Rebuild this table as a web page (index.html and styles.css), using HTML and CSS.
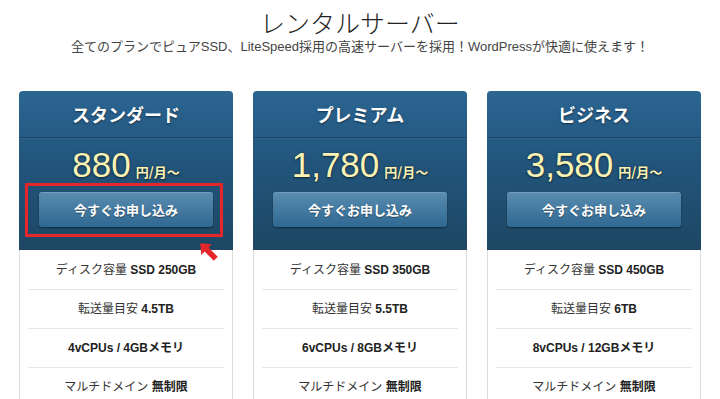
FILE: index.html
```html
<!DOCTYPE html>
<html lang="ja">
<head>
<meta charset="utf-8">
<title>レンタルサーバー</title>
<link rel="stylesheet" href="styles.css">
</head>
<body>
<header class="intro">
  <h1 class="title">レンタルサーバー</h1>
  <p class="lead">全てのプランでピュアSSD、LiteSpeed採用の高速サーバーを採用！WordPressが快適に使えます！</p>
</header>
<main class="plans">
  <section class="card">
    <div class="card-top">
      <h2 class="card-name">スタンダード</h2>
      <div class="price"><span class="amount">880</span><span class="unit">円/月〜</span></div>
      <a class="btn">今すぐお申し込み</a>
    </div>
    <ul class="specs">
      <li>ディスク容量 <b>SSD 250GB</b></li>
      <li>転送量目安 <b>4.5TB</b></li>
      <li><b>4vCPUs / 4GBメモリ</b></li>
      <li>マルチドメイン <b>無制限</b></li>
    </ul>
    <div class="highlight"></div>
    <svg class="arrow" width="28" height="28" viewBox="-14 -14 28 28"><g transform="rotate(-135)"><polygon points="-11,-2.8 2,-2.8 2,-7.5 11,0 2,7.5 2,2.8 -11,2.8" fill="#e5262b"/></g></svg>
  </section>
  <section class="card">
    <div class="card-top">
      <h2 class="card-name">プレミアム</h2>
      <div class="price"><span class="amount">1,780</span><span class="unit">円/月〜</span></div>
      <a class="btn">今すぐお申し込み</a>
    </div>
    <ul class="specs">
      <li>ディスク容量 <b>SSD 350GB</b></li>
      <li>転送量目安 <b>5.5TB</b></li>
      <li><b>6vCPUs / 8GBメモリ</b></li>
      <li>マルチドメイン <b>無制限</b></li>
    </ul>
  </section>
  <section class="card">
    <div class="card-top">
      <h2 class="card-name">ビジネス</h2>
      <div class="price"><span class="amount">3,580</span><span class="unit">円/月〜</span></div>
      <a class="btn">今すぐお申し込み</a>
    </div>
    <ul class="specs">
      <li>ディスク容量 <b>SSD 450GB</b></li>
      <li>転送量目安 <b>6TB</b></li>
      <li><b>8vCPUs / 12GBメモリ</b></li>
      <li>マルチドメイン <b>無制限</b></li>
    </ul>
  </section>
</main>
</body>
</html>
```
FILE: styles.css
```css
* { box-sizing: border-box; }
html, body { margin: 0; padding: 0; }
body {
  width: 720px;
  height: 399px;
  overflow: hidden;
  background: #fff;
  font-family: "Liberation Sans", "Noto Sans CJK JP", sans-serif;
  color: #333;
}
.intro { text-align: center; padding-top: 7px; }
.title {
  margin: 0;
  font-family: "Noto Sans CJK JP", sans-serif;
  font-weight: 300;
  font-size: 25px;
  line-height: 30px;
  color: #222;
}
.lead {
  margin: 1px 0 0;
  font-size: 13px;
  line-height: 18px;
  color: #444;
}
.plans {
  display: flex;
  justify-content: center;
  gap: 20px;
  margin-top: 35px;
}
.card {
  position: relative;
  width: 214px;
  border: 1px solid #dcdcdc;
  border-top: none;
  border-radius: 4px 4px 0 0;
  background: #fff;
}
.card-top {
  margin: 0 -1px;
  border-radius: 4px 4px 0 0;
  background: linear-gradient(#2b6592, #22557c 45%, #1d4763);
  text-align: center;
  padding-bottom: 23px;
}
.card-name {
  margin: 0;
  height: 47px;
  line-height: 46px;
  font-family: "Noto Sans CJK JP", sans-serif;
  font-size: 18px;
  font-weight: bold;
  color: #fff;
  text-shadow: 0 1px 2px rgba(0,0,0,.5);
  border-bottom: 1px solid #1b4564;
  box-shadow: 0 1px 0 rgba(255,255,255,.06);
}
.price {
  margin-top: 5px;
  height: 44px;
  line-height: 44px;
  color: #fbf3b4;
  text-shadow: 0 0 2px #1a3a52, 0 1px 2px rgba(0,0,0,.6);
}
.amount {
  font-family: "Liberation Sans", sans-serif;
  font-size: 35px;
}
.unit {
  margin-left: 5px;
  font-size: 13px;
  font-weight: bold;
  font-family: "Noto Sans CJK JP", sans-serif;
}
.btn {
  display: block;
  margin: 5px 20px 0;
  height: 35px;
  line-height: 35px;
  border-radius: 3px;
  background: linear-gradient(#5a8cb0, #2f6892);
  box-shadow: 0 1px 2px rgba(0,0,0,.45), inset 0 1px 0 rgba(255,255,255,.15);
  color: #fff;
  font-family: "Noto Sans CJK JP", sans-serif;
  font-size: 13px;
  font-weight: bold;
  text-shadow: 0 1px 1px rgba(0,0,0,.4);
}
.specs {
  list-style: none;
  margin: 0;
  padding: 1px 8px 0;
}
.specs li {
  height: 39px;
  line-height: 39px;
  text-align: center;
  font-family: "Liberation Sans", "Noto Sans CJK JP", sans-serif;
  font-size: 12px;
  color: #333;
  border-bottom: 1px solid #e6e6e6;
}
.specs b { color: #222; }
.highlight {
  position: absolute;
  left: 5px;
  top: 92px;
  width: 198px;
  height: 54px;
  border: 3px solid #e5262b;
}
.arrow {
  position: absolute;
  left: 174px;
  top: 146px;
}
```
